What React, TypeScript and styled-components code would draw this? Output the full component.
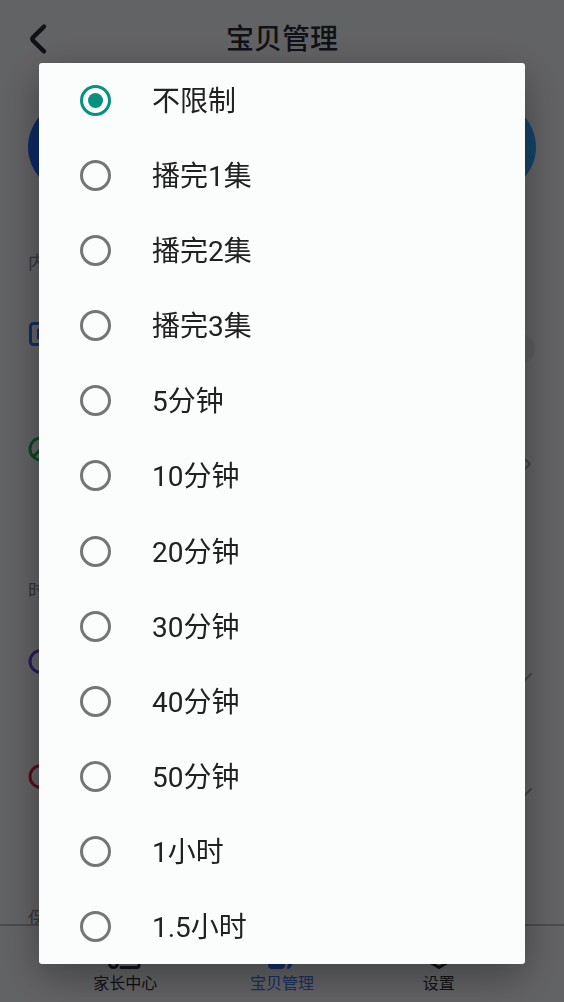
import React, { useState } from "react";
import styled, { createGlobalStyle } from "styled-components";

const GlobalStyle = createGlobalStyle`
  *, *::before, *::after { box-sizing: border-box; }
  body {
    margin: 0;
    background: #f6f7fc;
    color: #2a2d38;
    font-family: Roboto, "Noto Sans CJK SC", sans-serif;
  }
`;

const Screen = styled.div`
  display: flex;
  flex-direction: column;
  height: 100vh;
  overflow: hidden;
`;

const Header = styled.header`
  display: grid;
  grid-template-columns: 44px 1fr 44px;
  align-items: center;
  flex: none;
  height: 77px;
  padding: 0 16px;
`;

const BackButton = styled.button`
  display: flex;
  align-items: center;
  justify-content: center;
  height: 48px;
  padding: 0;
  border: 0;
  background: none;
  color: inherit;
`;

const Title = styled.h1`
  margin: 0;
  padding-top: 3px;
  font-size: 28px;
  line-height: 40px;
  font-weight: 500;
  text-align: center;
`;

const Content = styled.main`
  flex: 1;
  min-height: 0;
  overflow: hidden;
  padding: 24px 28px 0;
`;

const Banner = styled.div`
  height: 92px;
  border-radius: 46px;
  background: linear-gradient(90deg, #1c6bfa, #36aaff);
`;

const SectionTitle = styled.h2`
  margin: 0;
  padding: 58px 0 16px;
  font-size: 18px;
  line-height: 24px;
  font-weight: 400;
  color: #82858e;
`;

const SettingRow = styled.div`
  display: flex;
  align-items: center;
  justify-content: space-between;
  height: 115px;
`;

const SettingIcon = styled.span<{ $color: string }>`
  display: flex;
  padding-bottom: 29px;
  color: ${(p) => p.$color};
`;

const RowAction = styled.span<{ $inset?: boolean }>`
  display: flex;
  padding-right: ${(p) => (p.$inset ? 3 : 0)}px;
  color: #a3a7af;
`;

const NavBar = styled.nav`
  display: grid;
  grid-template-columns: repeat(3, 1fr);
  flex: none;
  height: 78px;
  padding: 0 47px;
  border-top: 2px solid #b9bbc1;
`;

const NavLink = styled.a<{ $active?: boolean }>`
  display: flex;
  flex-direction: column;
  align-items: center;
  justify-content: flex-end;
  gap: 3px;
  padding-bottom: 6px;
  font-size: 16px;
  line-height: 24px;
  text-decoration: none;
  color: ${(p) => (p.$active ? "#3b76f6" : "#2a2d38")};
`;

const Scrim = styled.div`
  position: fixed;
  inset: 0;
  display: flex;
  padding: 63px 39px 38px;
  background: rgba(0, 0, 0, 0.6);
`;

const Dialog = styled.fieldset`
  display: flex;
  flex-direction: column;
  flex: 1;
  min-width: 0;
  margin: 0;
  padding: 0;
  border: 0;
  border-radius: 3px;
  background: #fbfcfc;
  box-shadow: 0 12px 40px rgba(0, 0, 0, 0.36);
`;

const Option = styled.label`
  display: flex;
  align-items: center;
  flex: 1;
  gap: 41px;
  padding: 0 41px;
  font-size: 28px;
  line-height: 40px;
  color: #212121;
`;

const OptionText = styled.span`
  padding-top: 3px;
`;

const Radio = styled.input`
  appearance: none;
  display: grid;
  place-items: center;
  flex: none;
  width: 31px;
  height: 31px;
  margin: 0;
  border: 3px solid #757575;
  border-radius: 50%;

  &:checked {
    border-color: #079180;
  }

  &:checked::before {
    content: "";
    width: 15px;
    height: 15px;
    border-radius: 50%;
    background: #079180;
  }
`;

const options = [
  "不限制",
  "播完1集",
  "播完2集",
  "播完3集",
  "5分钟",
  "10分钟",
  "20分钟",
  "30分钟",
  "40分钟",
  "50分钟",
  "1小时",
  "1.5小时",
];

const stroke = { fill: "none", stroke: "currentColor", strokeLinecap: "round", strokeLinejoin: "round" } as const;

const BackIcon = () => (
  <svg width="20" height="32" viewBox="0 0 20 32" {...stroke} strokeWidth="4.4">
    <path d="M16 3.6 5 14.4Q3.6 16 5 17.6L16 28.4" />
  </svg>
);

const VideoIcon = () => (
  <svg width="26" height="26" viewBox="0 0 26 26" {...stroke} strokeWidth="3">
    <rect x="2.5" y="2.5" width="21" height="21" rx="3" />
    <path d="M10.5 9v8l7-4z" />
  </svg>
);

const BlockIcon = () => (
  <svg width="26" height="26" viewBox="0 0 26 26" {...stroke} strokeWidth="3">
    <circle cx="13" cy="13" r="11" />
    <path d="M5.5 20.5l15-15" />
  </svg>
);

const ClockIcon = () => (
  <svg width="26" height="26" viewBox="0 0 26 26" {...stroke} strokeWidth="3">
    <circle cx="13" cy="12.5" r="11" />
    <path d="M14 8v6h4" />
  </svg>
);

const ChevronRight = () => (
  <svg width="10" height="14" viewBox="0 0 10 14" {...stroke} strokeWidth="2">
    <path d="M2 2l5 5-5 5" />
  </svg>
);

const ChevronDown = () => (
  <svg width="16" height="10" viewBox="0 0 16 10" {...stroke} strokeWidth="2">
    <path d="M2 2l6 6 6-6" />
  </svg>
);

const SwitchIcon = () => (
  <svg width="54" height="32" viewBox="0 0 54 32">
    <rect x="4" y="5" width="46" height="22" rx="11" fill="#e2e5e8" />
    <circle cx="38" cy="16" r="15" fill="#e4e6e9" />
  </svg>
);

const HomeIcon = () => (
  <svg width="36" height="28" viewBox="0 0 36 28" {...stroke} strokeWidth="3">
    <path d="M8 14V6q0-2 2-2h20q2 0 2 2v18q0 2.500-2 2.500H14" />
    <circle cx="6.500" cy="22.500" r="4" />
  </svg>
);

const ManageIcon = () => (
  <svg width="32" height="28" viewBox="0 0 32 28" fill="currentColor">
    <rect x="2" y="4" width="17" height="24" rx="4" />
    <path d="M21 28q3 0 4-2l6-12h-4l-5 9z" />
  </svg>
);

const SettingsIcon = () => (
  <svg width="32" height="28" viewBox="0 0 32 28" {...stroke} strokeWidth="3">
    <path d="M16 2l12 6v11.500l-12 7-12-7V8z" />
    <circle cx="16" cy="13" r="4" />
  </svg>
);

export default function App() {
  const [selected, setSelected] = useState(options[0]);

  return (
    <>
      <GlobalStyle />
      <Screen>
        <Header>
          <BackButton type="button" aria-label="返回">
            <BackIcon />
          </BackButton>
          <Title>宝贝管理</Title>
        </Header>
        <Content>
          <Banner />
          <SectionTitle>内容</SectionTitle>
          <SettingRow>
            <SettingIcon $color="#2f72f0"><VideoIcon /></SettingIcon>
            <RowAction><SwitchIcon /></RowAction>
          </SettingRow>
          <SettingRow>
            <SettingIcon $color="#1fb055"><BlockIcon /></SettingIcon>
            <RowAction $inset><ChevronRight /></RowAction>
          </SettingRow>
          <SectionTitle>时间</SectionTitle>
          <SettingRow>
            <SettingIcon $color="#6a45e0"><ClockIcon /></SettingIcon>
            <RowAction $inset><ChevronDown /></RowAction>
          </SettingRow>
          <SettingRow>
            <SettingIcon $color="#d8204e"><ClockIcon /></SettingIcon>
            <RowAction $inset><ChevronDown /></RowAction>
          </SettingRow>
          <SectionTitle>保护</SectionTitle>
        </Content>
        <NavBar>
          <NavLink href="#parents"><HomeIcon />家长中心</NavLink>
          <NavLink href="#baby" $active><ManageIcon />宝贝管理</NavLink>
          <NavLink href="#settings"><SettingsIcon />设置</NavLink>
        </NavBar>
      </Screen>
      <Scrim>
        <Dialog role="radiogroup" aria-label="播放时长">
          {options.map((option) => (
            <Option key={option}>
              <Radio
                type="radio"
                name="limit"
                value={option}
                checked={selected === option}
                onChange={() => setSelected(option)}
              />
              <OptionText>{option}</OptionText>
            </Option>
          ))}
        </Dialog>
      </Scrim>
    </>
  );
}
